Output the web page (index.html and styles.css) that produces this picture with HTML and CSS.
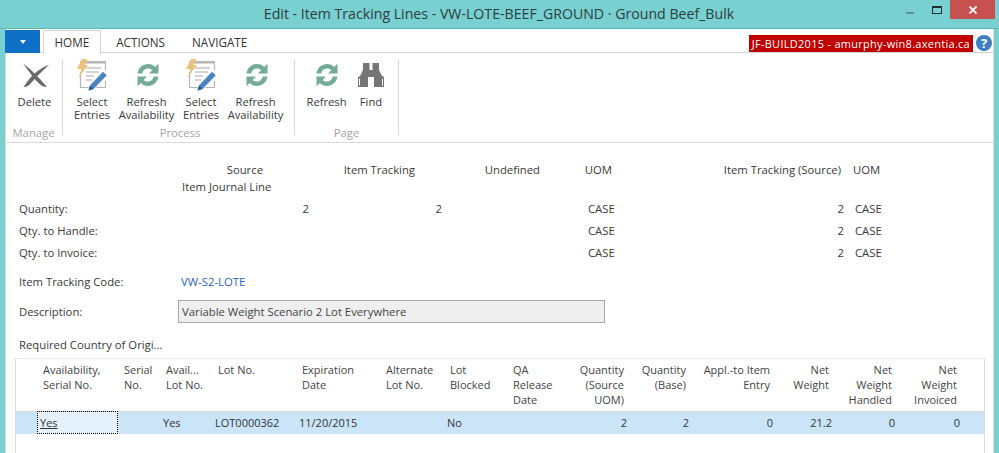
FILE: index.html
```html
<!DOCTYPE html>
<html lang="en">
<head>
<meta charset="utf-8">
<title>Edit - Item Tracking Lines</title>
<link rel="stylesheet" href="styles.css">
</head>
<body>
<svg class="defs" width="0" height="0">
  <defs>
    <symbol id="i-refresh" viewBox="0 0 28 28">
      <path d="M3.500 12.500C4.500 6.500 9 3 14 3c3 0 5.400 1.100 7.200 3L24.500 2.800v9.700H15l3.400-3.400C17.200 8 15.800 7.500 14 7.500c-2.800 0-5 1.800-5.800 5z" fill="#75ab99"/>
      <path d="M24.500 15.500C23.500 21.500 19 25 14 25c-3 0-5.400-1.100-7.200-3L3.500 25.200v-9.700H13l-3.400 3.400c1.200 1.100 2.600 1.600 4.400 1.600 2.800 0 5-1.800 5.800-5z" fill="#75ab99"/>
    </symbol>
    <symbol id="i-select" viewBox="0 0 32 32">
      <path d="M3 3h26v26H3z" fill="#fff"/>
      <path d="M3 2h26v2.500H3z" fill="#b5b5b5"/>
      <path d="M3.500 13v15.500h25V22M28.500 4v7" fill="none" stroke="#b5b5b5" stroke-width="1.200"/>
      <path d="M9 9h15M9 13h13M9 17h8M9 21h6" stroke="#a8a8a8" stroke-width="1.100"/>
      <path d="M5 0h5.500L7.500 6H11L1.500 19l3-9H0z" fill="#eec27c"/>
      <path d="M10.500 32.500l2-7L26 11.500l5 4.500-13.500 14z" fill="#fff"/>
      <path d="M11.500 31.500l1.800-5.500L26 12.800l3.800 3.400L17 29.500z" fill="#4b84c4"/>
      <path d="M11.500 31.500l1.500-5 4 3.500z" fill="#2e5f9a"/>
    </symbol>
  </defs>
</svg>
<header class="titlebar">
  <h1 class="title">Edit - Item Tracking Lines - VW-LOTE-BEEF_GROUND · Ground Beef_Bulk</h1>
  <div class="winctl">
    <span class="min"></span>
    <span class="max"></span>
    <span class="close">
      <svg width="8" height="8" viewBox="0 0 8 8"><path d="M.5.500l7 7M7.500.500l-7 7" stroke="#fff" stroke-width="1.800"/></svg>
    </span>
  </div>
</header>
<div class="window">
  <nav class="tabbar">
    <button class="appbtn" type="button"><span class="caret"></span></button>
    <span class="tab active">HOME</span>
    <span class="tab">ACTIONS</span>
    <span class="tab">NAVIGATE</span>
    <span class="server">JF-BUILD2015 - amurphy-win8.axentia.ca</span>
    <span class="help">?</span>
  </nav>
  <div class="ribbon">
    <section class="group g-manage">
      <div class="actions">
        <div class="action a-delete">
          <svg class="icon" width="28" height="28" viewBox="0 0 28 28"><path d="M2 1.500c6 4 11 9.500 15 13.500 3 3 5.500 6 9 10-3.500 0-5.500-1-8-3.500C13 17 7 8 2 1.500z" fill="#6a6a6a"/><path d="M28 3c-6 1.500-13.500 7-18 12-3 3.300-5 6.500-7.500 10 3.500 0 5.500-1.500 8-4.500C15 15.500 22 8 28 3z" fill="#6a6a6a"/></svg>
          <span>Delete</span>
        </div>
      </div>
      <div class="glabel">Manage</div>
    </section>
    <section class="group g-process">
      <div class="actions">
        <div class="action a-sel"><svg class="icon" width="32" height="32"><use href="#i-select"/></svg><span>Select<br>Entries</span></div>
        <div class="action a-ref"><svg class="icon" width="28" height="28"><use href="#i-refresh"/></svg><span>Refresh<br>Availability</span></div>
        <div class="action a-sel"><svg class="icon" width="32" height="32"><use href="#i-select"/></svg><span>Select<br>Entries</span></div>
        <div class="action a-ref"><svg class="icon" width="28" height="28"><use href="#i-refresh"/></svg><span>Refresh<br>Availability</span></div>
      </div>
      <div class="glabel">Process</div>
    </section>
    <section class="group g-page">
      <div class="actions">
        <div class="action a-pref"><svg class="icon" width="28" height="28"><use href="#i-refresh"/></svg><span>Refresh</span></div>
        <div class="action a-find">
          <svg class="icon" width="28" height="28" viewBox="0 0 28 28"><path d="M6 1h6.500v7h3V1H22v7l3 6 2 1v10h-10V15h-6v10H1V15l2-1 3-6z" fill="#757575"/><path d="M2.500 16.500v7M25.500 16.500v7" stroke="#fff" stroke-width="1"/></svg>
          <span>Find</span>
        </div>
      </div>
      <div class="glabel">Page</div>
    </section>
  </div>
  <main class="content">
    <div class="summary">
      <div></div><div class="sh c1">Source</div><div class="sh c2">Item Tracking</div><div class="sh c3">Undefined</div><div class="sh c4">UOM</div><div class="sh c5">Item Tracking (Source)</div><div class="sh c6">UOM</div>
      <div></div><div class="sub">Item Journal Line</div><div></div><div></div><div></div><div></div><div></div>
      <div class="lb">Quantity:</div><div class="num">2</div><div class="num">2</div><div></div><div class="uom">CASE</div><div class="num">2</div><div class="uom2">CASE</div>
      <div class="lb">Qty. to Handle:</div><div></div><div></div><div></div><div class="uom">CASE</div><div class="num">2</div><div class="uom2">CASE</div>
      <div class="lb">Qty. to Invoice:</div><div></div><div></div><div></div><div class="uom">CASE</div><div class="num">2</div><div class="uom2">CASE</div>
    </div>
    <div class="field f-code"><span class="flabel">Item Tracking Code:</span><a class="link">VW-S2-LOTE</a></div>
    <div class="field f-desc"><span class="flabel desc-l">Description:</span><div class="input">Variable Weight Scenario 2 Lot Everywhere</div></div>
    <div class="field f-req"><span class="flabel">Required Country of Origi...</span></div>
    <div class="gridbox">
    <table class="lines">
      <colgroup>
        <col class="w21"><col class="w81"><col class="w42"><col class="w52"><col class="w84"><col class="w84"><col class="w64"><col class="w63"><col class="w63"><col class="w60"><col class="w62"><col class="w84"><col class="w59"><col class="w63"><col class="w65"><col>
      </colgroup>
      <thead>
        <tr>
          <th></th><th>Availability,<br>Serial No.</th><th>Serial<br>No.</th><th>Avail...<br>Lot No.</th><th>Lot No.</th><th>Expiration<br>Date</th><th>Alternate<br>Lot No.</th><th>Lot<br>Blocked</th><th>QA<br>Release<br>Date</th><th class="r">Quantity<br>(Source<br>UOM)</th><th class="r">Quantity<br>(Base)</th><th class="r">Appl.-to Item<br>Entry</th><th class="r">Net<br>Weight</th><th class="r">Net<br>Weight<br>Handled</th><th class="r">Net<br>Weight<br>Invoiced</th><th></th>
        </tr>
      </thead>
      <tbody>
        <tr>
          <td></td><td class="focus"><u>Yes</u></td><td></td><td>Yes</td><td>LOT0000362</td><td>11/20/2015</td><td></td><td>No</td><td></td><td class="r">2</td><td class="r">2</td><td class="r">0</td><td class="r">21.2</td><td class="r">0</td><td class="r">0</td><td></td>
        </tr>
      </tbody>
    </table>
    </div>
  </main>
</div>
</body>
</html>
```
FILE: styles.css
```css
* { box-sizing: border-box; }
html, body { margin: 0; height: 100%; overflow: hidden; }
body {
  background: #78d0d0;
  font-family: "Open Sans", "Noto Sans", sans-serif;
  font-size: 11px;
  color: #3a3a3a;
  width: 999px;
  height: 453px;
  display: flex;
  flex-direction: column;
}
.defs { position: absolute; }

.titlebar { height: 29px; position: relative; display: flex; justify-content: center; border-bottom: 1px solid #5fb6b6; }
.title { margin: 0; font-weight: 400; font-size: 14.150px; line-height: 28px; color: #2f3d3d; padding-right: 1px; white-space: nowrap; }
.winctl { position: absolute; top: 0; right: 4px; display: flex; align-items: flex-start; }
.min { width: 8px; height: 2px; background: #5f8f92; margin: 12px 18px 0 0; }
.max { width: 10px; height: 8px; border: 1px solid #1f2f30; border-top-width: 2px; margin: 6px 8px 0 0; }
.close { width: 45px; height: 19px; background: #c75050; display: flex; align-items: center; justify-content: center; }

.window { flex: 1; margin: 0 5px; background: #fff; display: flex; flex-direction: column; min-height: 0; box-shadow: inset 1px 0 #dcdcdc, inset -1px 0 #dcdcdc; }

.tabbar { height: 24px; display: flex; align-items: stretch; position: relative; border-bottom: 1px solid #d4d4d4; padding-top: 1px; }
.appbtn { width: 35px; height: 23px; margin: 0 3px 0 0; border: 0; padding: 0; background: #0f6fc6; display: flex; align-items: center; justify-content: center; }
.caret { width: 0; height: 0; border-style: solid; border-color: #fff transparent transparent; border-width: 4px 3.500px 0; }
.tab { font-size: 11.700px; line-height: 24px; padding: 0 11px; color: #333; height: 23px; margin-right: 5px; }
.tab.active { border: 1px solid #d4d4d4; border-bottom: 0; background: #fff; height: 24px; line-height: 23px; padding: 0 10.500px; margin-right: 4.500px; }
.server { margin-left: auto; margin-top: 5px; height: 17px; background: #c00000; color: #fff; font-size: 11px; line-height: 17px; padding: 0 3px; letter-spacing: .28px; white-space: nowrap; }
.help { width: 16px; height: 16px; border-radius: 50%; background: #3f7fbf; color: #fff; font: 700 13px/16px "Open Sans", sans-serif; text-align: center; margin: 5px 2px 0 3px; }

.ribbon { height: 90px; display: flex; border-bottom: 1px solid #d8d8d8; padding-top: 7px; }
.group { display: flex; flex-direction: column; border-right: 1px solid #d8d8d8; height: 75px; }
.g-manage { width: 58px; }
.g-process { width: 232px; padding-left: 3px; }
.g-page { width: 104px; }
.actions { flex: 1; display: flex; }
.glabel { text-align: center; color: #a6a6a6; font-size: 11.300px; line-height: 15px; margin-bottom: -5px; }
.action { display: flex; flex-direction: column; align-items: center; text-align: center; font-size: 11.200px; line-height: 13px; color: #3a3a3a; }
.action .icon { display: block; flex: none; margin: 1px 0 6px; }
.action span { white-space: nowrap; }
.a-delete { width: 56px; margin-left: 2px; }
.a-delete .icon { margin: 2px 0 5px 1px; }
.a-sel { width: 50px; margin-left: 1px; }
.action.a-sel .icon { margin: -1px 0 4px 1px; }
.a-ref { width: 57px; margin-left: 1px; }
.a-ref .icon { margin-left: 3px; }
.a-pref { width: 53px; margin-left: 5px; }
.a-find { width: 36px; }
.a-find .icon { margin: 2px 0 5px; }

.content { padding: 20px 0 0; font-size: 11.300px; color: #3a3a3a; flex: 1; min-height: 0; display: flex; flex-direction: column; }
.summary {
  display: grid;
  grid-template-columns: 161px 130px 133px 137px 45px 220px 90px;
  grid-template-rows: 16px 20px 22px 22px 22px;
  margin-left: 14px;
  line-height: 14px;
  height: 106px;
  flex: none;
}
.sh { text-align: right; }
.c1 { padding-right: 47px; }
.c2 { padding-right: 28px; }
.c3 { padding-right: 40px; }
.c4 { padding-right: 13px; }
.c5 { padding-right: 4px; }
.c6 { padding-left: 8px; text-align: left; }
.sub { white-space: nowrap; padding-left: 2px; padding-top: 1px; }
.num { text-align: right; padding-top: 3px; padding-right: 1px; }
.uom { padding: 3px 0 0 8px; }
.uom2 { padding: 3px 0 0 10px; }
.lb { padding-top: 3px; white-space: nowrap; }

.field { display: flex; align-items: center; margin-left: 14px; flex: none; }
.flabel { width: 162px; flex: none; white-space: nowrap; }
.desc-l { width: 159px; }
.f-code { height: 24px; }
.link { color: #2b63c4; }
.f-desc { height: 24px; margin-top: 6px; }
.input { width: 427px; height: 23px; background: #efefef; border: 1px solid #a8a8a8; line-height: 21px; padding-left: 3px; color: #444; }
.f-req { height: 16px; margin-top: 13px; }

.gridbox { flex: 1; min-height: 0; margin: 6px 9px 0 10px; border: 1px solid #dcdcdc; border-top-color: #e8e8e8; border-bottom: 0; overflow: hidden; }
.lines { width: 100%; font-size: 11px; border-collapse: collapse; table-layout: fixed; }
.w21 { width: 21px; } .w81 { width: 81px; } .w42 { width: 42px; } .w52 { width: 52px; } .w84 { width: 84px; } .w64 { width: 64px; } .w63 { width: 63px; } .w60 { width: 60px; } .w62 { width: 62px; } .w59 { width: 59px; } .w65 { width: 65px; }
.lines th { font-weight: 400; text-align: left; vertical-align: top; line-height: 15px; padding: 3px 6px 3px; height: 52px; color: #444; white-space: nowrap; border-bottom: 1px solid #d8d8d8; overflow: visible; }
.lines .r { text-align: right; }
.lines td { height: 23px; background: #cce4f7; padding: 0 3px; white-space: nowrap; overflow: hidden; color: #333; }
.lines td.focus { background: #e4f1fb; outline: 1px dotted #000; outline-offset: -1px; }
```
